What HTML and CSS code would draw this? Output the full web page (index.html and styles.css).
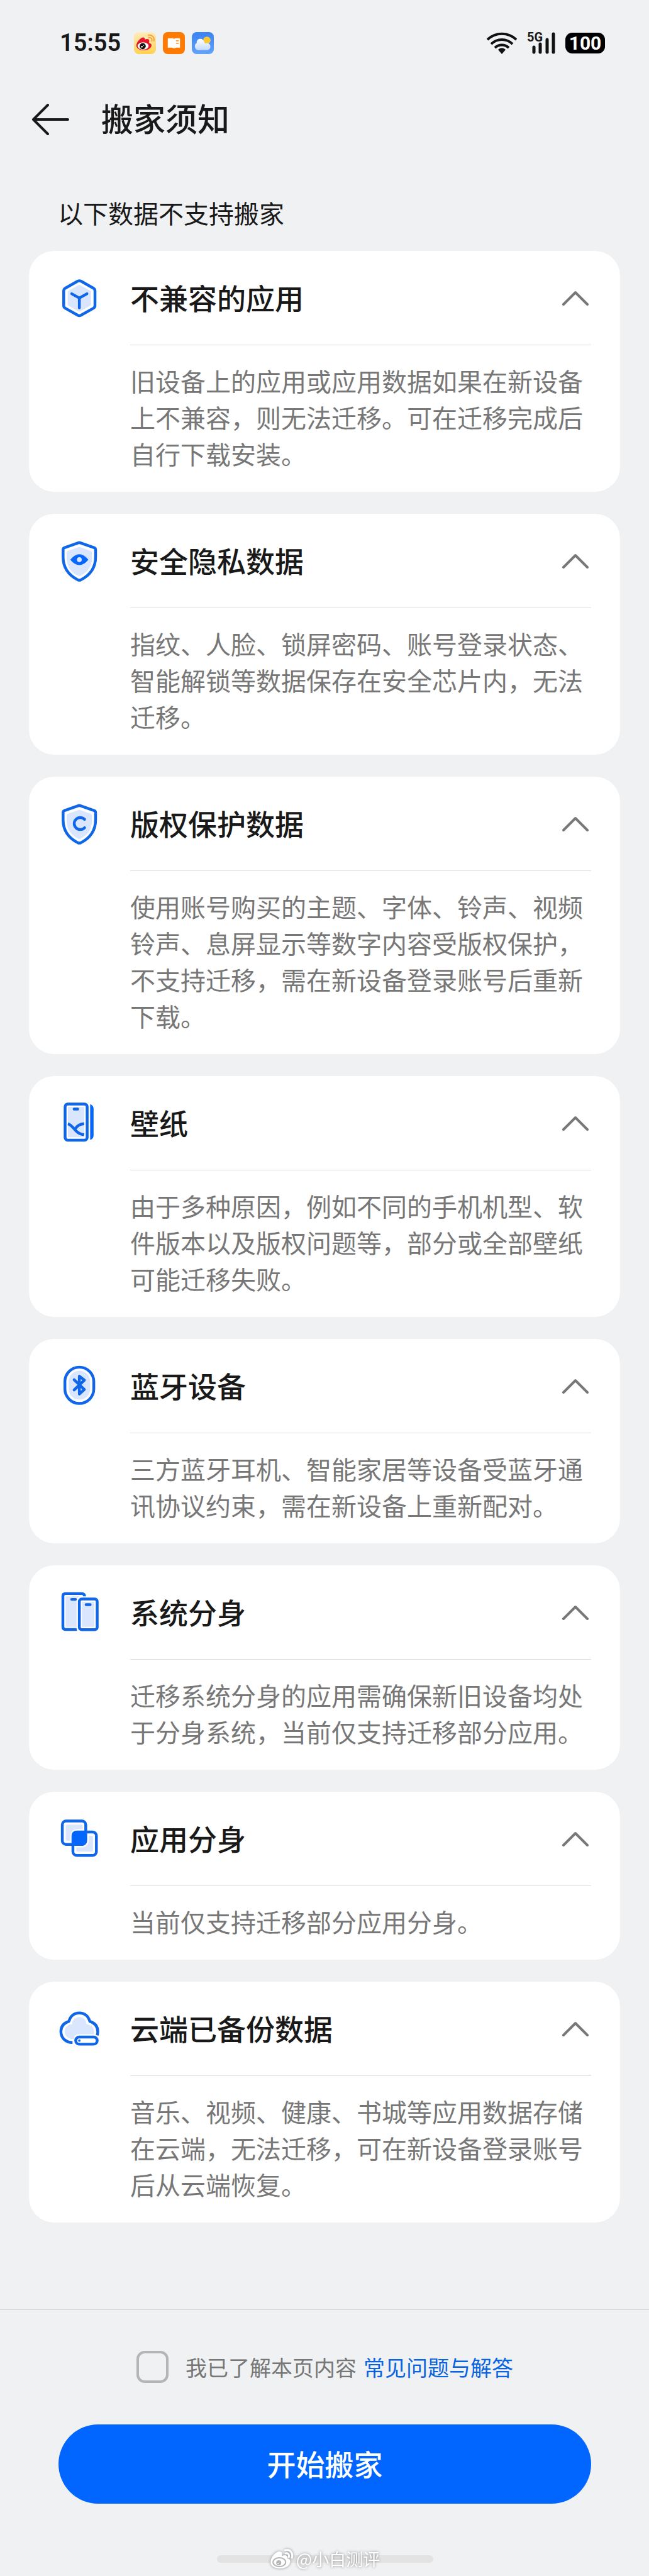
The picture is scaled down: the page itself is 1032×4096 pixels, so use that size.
FILE: index.html
```html
<!DOCTYPE html>
<html lang="zh-CN">
	<head>
		<title>搬家须知</title>
		<meta charset="UTF-8" />
		<meta name="viewport" content="width=device-width, initial-scale=1" />
		<link rel="stylesheet" href="styles.css">
	</head>
	<body>
		<div class="statusBar">
			<span class="time">15:55</span>
			<div class="notifications">
				<svg width="35" height="35" viewBox="0 0 108 108">
					<defs>
						<linearGradient id="weiboBg" x1="0" y1="0" x2="0" y2="1"><stop offset="0" stop-color="#ffebbd"/><stop offset="1" stop-color="#ffd24f"/></linearGradient>
					</defs>
					<rect width="108" height="108" rx="24" fill="url(#weiboBg)"/>
					<path d="M12 66c0-16 18-37 32-40 8-1 10 4 9 11 10-4 22-5 22 7 0 4-1 7-1 9 9 2 14 7 12 15-3 13-19 21-37 21S12 81 12 66z" fill="#e6162d"/>
					<ellipse cx="45" cy="68" rx="27" ry="18" fill="#fff"/>
					<circle cx="43" cy="69" r="15" fill="#111"/>
					<circle cx="39" cy="72" r="4" fill="#fff"/>
					<circle cx="48" cy="66" r="2" fill="#fff"/>
					<path d="M72 27c11-2 19 6 16 17M70 15c18-3 32 10 28 28" fill="none" stroke="#f8a13a" stroke-width="6" stroke-linecap="round"/>
				</svg>
				<svg width="35" height="35" viewBox="0 0 108 108">
					<rect width="108" height="108" rx="24" fill="#ff7a00"/>
					<path d="M27 30h23l5 4 5-4h20q4 0 4 4v42H65q-10 6-20 0H24V34q0-4 3-4z" fill="#fff"/>
					<path d="M64 43h14M64 55h14" stroke="#ff7a00" stroke-width="4"/>
				</svg>
				<svg width="35" height="35" viewBox="0 0 108 108">
					<defs>
						<linearGradient id="skyBg" x1="0" y1="0" x2="0" y2="1"><stop offset="0" stop-color="#3b82f3"/><stop offset="1" stop-color="#62a3f8"/></linearGradient>
						<linearGradient id="cloudBg" x1="0" y1="0" x2="0" y2="1"><stop offset="0" stop-color="#fff"/><stop offset="1" stop-color="#c3dafa"/></linearGradient>
					</defs>
					<rect width="108" height="108" rx="24" fill="url(#skyBg)"/>
					<circle cx="74" cy="40" r="18" fill="#ffc933"/>
					<path d="M36 89c-12 0-21-8-21-19 0-8 4-14 9-16-1-13 7-21 18-21 10 0 16 6 19 16 3 6 6 7 12 6 11-1 18 6 18 16 0 11-8 18-19 18z" fill="url(#cloudBg)"/>
				</svg>
			</div>
			<div class="signals">
				<svg width="48" height="35" viewBox="0 0 48 35">
					<g fill="none" stroke="#111" stroke-width="4">
						<path d="M1 12a33 33 0 0 1 46 0"/>
						<path d="M7 19a24 24 0 0 1 34 0"/>
						<path d="M13 25a16 16 0 0 1 22 0"/>
					</g>
					<path d="M24 35l-6-7a8 8 0 0 1 12 0z" fill="#111"/>
				</svg>
				<div class="mobile">
					<span class="network">5G</span>
					<svg width="37" height="35" viewBox="0 0 37 35">
						<path d="M3 24v8M13 19v13M24 12v20M34 3v29" stroke="#111" stroke-width="5" stroke-linecap="round"/>
					</svg>
				</div>
				<span class="battery">100</span>
			</div>
		</div>

		<div class="titleBar">
			<button class="back" type="button" aria-label="返回">
				<svg width="60" height="50" viewBox="0 0 60 50">
					<path d="M26 2L3 25l23 23M3 25h55" fill="none" stroke="#191919" stroke-width="4" stroke-linecap="round" stroke-linejoin="round"/>
				</svg>
			</button>
			<h1>搬家须知</h1>
		</div>

		<div class="content">
			<h2>以下数据不支持搬家</h2>

			<details class="card" open>
				<summary>
					<svg class="icon" viewBox="52 67 207 207">
						<path d="M148 86q8-4 16 0l62 35q8 5 8 14v72q0 9-8 14l-62 35q-8 4-16 0l-62-35q-8-5-8-14v-72q0-9 8-14z" class="line"/>
						<path d="M151 106q5-2 10 0l48 27q5 3 5 8v60q0 5-5 8l-48 27q-5 2-10 0l-48-27q-5-3-5-8v-60q0-5 5-8z" class="tint"/>
						<path d="M118 149l38 21 38-21M156 170v49" class="line"/>
					</svg>
					<span class="name">不兼容的应用</span>
					<svg class="arrow" viewBox="0 0 42 24"><path d="M2 22L21 3l19 19"/></svg>
				</summary>
				<p>旧设备上的应用或应用数据如果在新设备上不兼容，则无法迁移。可在迁移完成后自行下载安装。</p>
			</details>

			<details class="card" open>
				<summary>
					<svg class="icon" viewBox="52 61 207 207">
						<path d="M149 75q7-4 14 0l67 23q7 3 7 10v37c0 53-27 90-74 114q-7 3-14 0c-47-24-74-61-74-114v-37q0-7 7-10z" class="line"/>
						<path d="M150 96q6-2 12 0l51 18q6 2 6 9v25c0 43-19 70-57 90q-6 3-12 0c-38-20-57-47-57-90v-25q0-7 6-9z" class="tint"/>
						<path d="M111 158q45-54 90 0-45 54-90 0z" class="solid"/>
						<circle cx="156" cy="158" r="12" class="tint"/>
					</svg>
					<span class="name">安全隐私数据</span>
					<svg class="arrow" viewBox="0 0 42 24"><path d="M2 22L21 3l19 19"/></svg>
				</summary>
				<p>指纹、人脸、锁屏密码、账号登录状态、智能解锁等数据保存在安全芯片内，无法迁移。</p>
			</details>

			<details class="card" open>
				<summary>
					<svg class="icon" viewBox="52 61 207 207">
						<path d="M149 75q7-4 14 0l67 23q7 3 7 10v37c0 53-27 90-74 114q-7 3-14 0c-47-24-74-61-74-114v-37q0-7 7-10z" class="line"/>
						<path d="M150 96q6-2 12 0l51 18q6 2 6 9v25c0 43-19 70-57 90q-6 3-12 0c-38-20-57-47-57-90v-25q0-7 6-9z" class="tint"/>
						<path d="M182 142a30 30 0 1 0 0 42" class="line"/>
					</svg>
					<span class="name">版权保护数据</span>
					<svg class="arrow" viewBox="0 0 42 24"><path d="M2 22L21 3l19 19"/></svg>
				</summary>
				<p>使用账号购买的主题、字体、铃声、视频铃声、息屏显示等数字内容受版权保护，不支持迁移，需在新设备登录账号后重新下载。</p>
			</details>

			<details class="card" open>
				<summary>
					<svg class="icon" viewBox="52 76 207 207">
						<rect x="85" y="84" width="110" height="180" rx="13" class="line"/>
						<rect x="99" y="98" width="81" height="151" rx="5" class="tint"/>
						<path d="M130 109h18" class="line"/>
						<path d="M99 182q14 4 36 31 20 22 45 24M135 208q15-24 45-26" class="line butt"/>
						<path d="M210 85q17 6 17 24v130q0 18-17 24z" class="solid"/>
					</svg>
					<span class="name">壁纸</span>
					<svg class="arrow" viewBox="0 0 42 24"><path d="M2 22L21 3l19 19"/></svg>
				</summary>
				<p>由于多种原因，例如不同的手机机型、软件版本以及版权问题等，部分或全部壁纸可能迁移失败。</p>
			</details>

			<details class="card" open>
				<summary>
					<svg class="icon" viewBox="52 96 207 207">
						<rect x="84" y="105" width="144" height="181" rx="72" class="line"/>
						<rect x="103" y="123" width="107" height="144" rx="53" class="tint"/>
						<path d="M130 168l51 48-25 23v-89l25 20-51 49" class="line"/>
					</svg>
					<span class="name">蓝牙设备</span>
					<svg class="arrow" viewBox="0 0 42 24"><path d="M2 22L21 3l19 19"/></svg>
				</summary>
				<p>三方蓝牙耳机、智能家居等设备受蓝牙通讯协议约束，需在新设备上重新配对。</p>
			</details>

			<details class="card" open>
				<summary>
					<svg class="icon" viewBox="52 117 207 207">
						<path d="M182 142v-2q0-14-14-14H87q-13 0-13 13v153q0 13 13 13h58" class="line butt"/>
						<rect x="88" y="140" width="70" height="152" rx="4" class="tint"/>
						<path d="M118 155h19" class="line"/>
						<rect x="142" y="140" width="118" height="180" rx="20" fill="#fff"/>
						<rect x="156" y="153" width="89" height="153" rx="12" class="line"/>
						<rect x="169" y="167" width="62" height="125" rx="4" class="tint"/>
						<path d="M190 181h20" class="line"/>
					</svg>
					<span class="name">系统分身</span>
					<svg class="arrow" viewBox="0 0 42 24"><path d="M2 22L21 3l19 19"/></svg>
				</summary>
				<p>迁移系统分身的应用需确保新旧设备均处于分身系统，当前仅支持迁移部分应用。</p>
			</details>

			<details class="card" open>
				<summary>
					<svg class="icon" viewBox="52 107 207 207">
						<path d="M96 139h69q8 0 8 8v14h-24q-38 0-38 38v20H96q-8 0-8-8v-64q0-8 8-8z" class="tint"/>
						<path d="M216 274h-67q-8 0-8-8v-13h24q38 0 38-38v-21h13q8 0 8 8v64q0 8-8 8z" class="tint"/>
						<rect x="71" y="121" width="117" height="117" rx="19" class="line"/>
						<rect x="124" y="176" width="117" height="117" rx="19" class="line"/>
						<rect x="118" y="170" width="75" height="74" rx="22" class="solid"/>
					</svg>
					<span class="name">应用分身</span>
					<svg class="arrow" viewBox="0 0 42 24"><path d="M2 22L21 3l19 19"/></svg>
				</summary>
				<p>当前仅支持迁移部分应用分身。</p>
			</details>

			<details class="card" open>
				<summary>
					<svg class="icon" viewBox="52 96 207 207">
						<path d="M122 268C90 268 64 246 64 213q0-39 40-51c7-26 26-42 52-42s45 16 52 42q40 12 40 51 0 10-3 19" class="line butt"/>
						<path d="M130 250h-8c-22 0-39-16-39-36 0-22 15-36 37-37 1-22 16-36 36-36s35 14 36 36c22 1 37 15 37 37v12h-76q-23 0-23 24z" class="tint"/>
						<rect x="138" y="240" width="107" height="36" rx="18" class="line"/>
						<circle cx="156" cy="258" r="6" class="solid"/>
					</svg>
					<span class="name">云端已备份数据</span>
					<svg class="arrow" viewBox="0 0 42 24"><path d="M2 22L21 3l19 19"/></svg>
				</summary>
				<p>音乐、视频、健康、书城等应用数据存储在云端，无法迁移，可在新设备登录账号后从云端恢复。</p>
			</details>
		</div>

		<div class="footer">
			<div class="agree">
				<input type="checkbox" id="agree" />
				<label for="agree">我已了解本页内容</label>
				<a href="#">常见问题与解答</a>
			</div>
			<button class="start" type="button">开始搬家</button>
			<div class="homeBar">
				<div class="watermark">
					<svg width="38" height="34" viewBox="0 0 38 34">
						<path d="M1 22C1 14 9 5 15 5c4 0 5 3 4 7 5-2 10-1 9 4 4 1 5 4 4 7-2 6-9 9-16 9S1 29 1 22z" fill="#fff"/>
						<ellipse cx="15" cy="22" rx="10" ry="7" fill="none" stroke="#b4b4b4" stroke-width="2"/>
						<circle cx="14" cy="23" r="4" fill="#b4b4b4"/>
						<circle cx="13" cy="24" r="1" fill="#fff"/>
						<path d="M25 8c4-1 6 2 5 6M24 3c8-2 13 4 11 12" fill="none" stroke="#fff" stroke-width="3" stroke-linecap="round"/>
					</svg>
					<span>@小白测评</span>
				</div>
			</div>
		</div>
	</body>
</html>
```
FILE: styles.css
```css
* {
	box-sizing: border-box;
}
body {
	display: flex;
	flex-direction: column;
	min-height: 100vh;
	margin: 0px;
	background: #f0f1f3;
	color: #191919;
	font-size: 40px;
	font-family: "Noto Sans CJK SC", sans-serif;
}
h1, h2, p {
	margin: 0px;
	font-weight: 400;
}
svg {
	display: block;
	flex: none;
}
button {
	border: 0px;
	padding: 0px;
	font-family: inherit;
}

/* status bar */
.statusBar {
	display: flex;
	align-items: center;
	height: 136px;
	padding: 0px 70px 0px 95px;
	font-family: Roboto, sans-serif;
}
.time {
	font-size: 38px;
	font-weight: 600;
}
.notifications {
	display: flex;
	gap: 11px;
	margin-left: 21px;
}
.signals {
	display: flex;
	align-items: center;
	gap: 16px;
	margin-left: auto;
}
.mobile {
	position: relative;
	padding-left: 8px;
}
.network {
	position: absolute;
	left: 0px;
	top: -4px;
	font-size: 20px;
	font-weight: 700;
	line-height: 24px;
}
.battery {
	width: 63px;
	border-radius: 11px;
	background: #000;
	color: #fff;
	font-size: 30px;
	font-weight: 700;
	line-height: 33px;
	text-align: center;
}

.titleBar {
	display: flex;
	align-items: center;
	gap: 51px;
	height: 108px;
	padding: 0px 50px;
}
.back {
	background: none;
}
h1 {
	padding-bottom: 6px;
	font-size: 51px;
	font-weight: 500;
	line-height: 60px;
}
h2 {
	padding: 0px 46px;
	margin-bottom: -3px;
	font-size: 40px;
	line-height: 58px;
}

/* cards */
.content {
	display: flex;
	flex-direction: column;
	gap: 35px;
	padding: 65px 46px 0px;
}
.card {
	padding: 0px 46px 32px 47px;
	border-radius: 40px;
	background: #fff;
}
summary {
	display: flex;
	align-items: center;
	height: 149px;
	list-style: none;
}
.icon {
	width: 66px;
	height: 66px;
}
.name {
	flex: 1;
	margin-left: 48px;
	padding-bottom: 4px;
	font-size: 46px;
	font-weight: 500;
	line-height: 60px;
}
.arrow {
	width: 42px;
	height: 24px;
	margin-right: 4px;
	fill: none;
	stroke: #777;
	stroke-width: 4px;
	stroke-linecap: round;
	stroke-linejoin: round;
}
.card p {
	margin-left: 114px;
	padding-top: 27px;
	border-top: 1px solid #dedede;
	color: #777;
	line-height: 58px;
}
.line {
	fill: none;
	stroke: #0f66e8;
	stroke-width: 14px;
	stroke-linecap: round;
	stroke-linejoin: round;
}
.butt {
	stroke-linecap: butt;
}
.tint {
	fill: #d9e6fd;
}
.solid {
	fill: #0466fb;
}

/* bottom panel */
.footer {
	margin-top: auto;
	padding: 65px 92px 21px 93px;
	border-top: 1px solid #d2d4d6;
	background: #eff1f3;
}
.agree {
	display: flex;
	align-items: center;
	justify-content: center;
	margin-bottom: 66px;
	color: #777;
	font-size: 34px;
	line-height: 51px;
}
.agree input {
	appearance: none;
	width: 51px;
	height: 51px;
	margin: 0px 27px 0px 0px;
	border: 4px solid #b4b5b6;
	border-radius: 13px;
}
.agree a {
	margin-left: 11px;
	color: #0a64e0;
	text-decoration: none;
}
.start {
	display: block;
	width: 100%;
	height: 126px;
	padding-bottom: 4px;
	border-radius: 63px;
	background: #06f;
	color: #fff;
	font-size: 46px;
	font-weight: 500;
}
.homeBar {
	position: relative;
	width: 344px;
	height: 12px;
	margin: 82px auto 0px;
	border-radius: 6px;
	background: #e3e3e3;
}
.watermark {
	position: absolute;
	left: 50%;
	top: 50%;
	display: flex;
	align-items: center;
	gap: 4px;
	transform: translate(-50%, -50%);
	color: #fff;
	font-size: 27px;
	line-height: 36px;
	white-space: nowrap;
	filter: drop-shadow(0px 0px 2px #888);
}
```
